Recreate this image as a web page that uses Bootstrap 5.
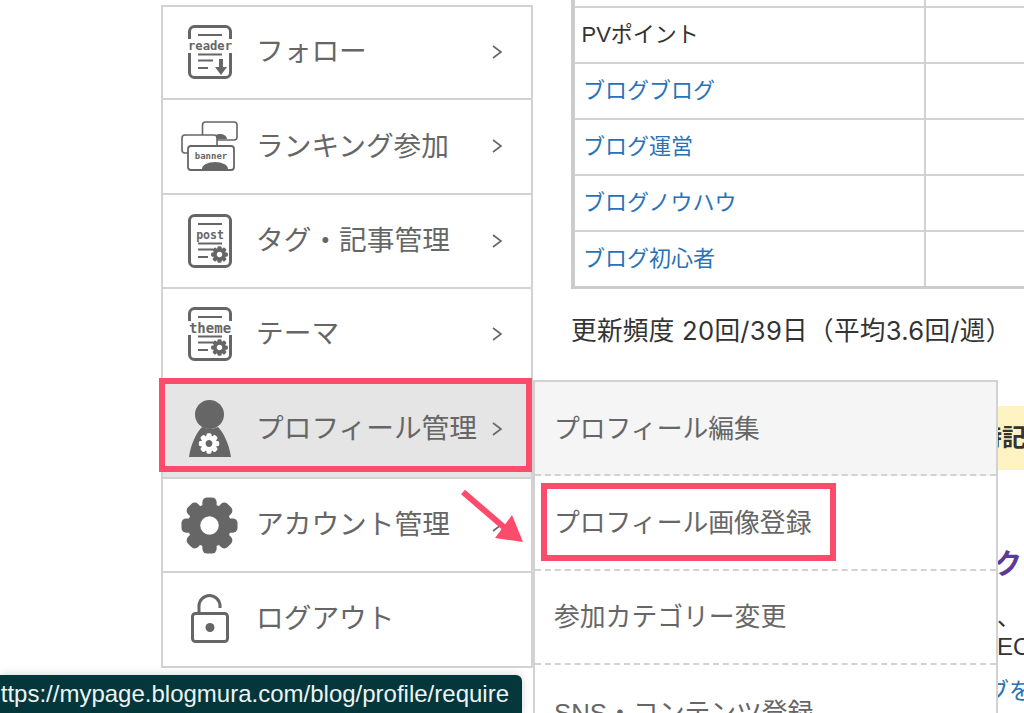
<!DOCTYPE html>
<html lang="ja">
<head>
<meta charset="utf-8">
<title>プロフィール管理</title>
<link href="https://cdn.jsdelivr.net/npm/bootstrap@5.3.0/dist/css/bootstrap.min.css" rel="stylesheet">
<style>
html,body{height:713px;overflow:hidden;background:#fff}
body{font-family:"Liberation Sans","Noto Sans CJK JP",sans-serif;color:#333}
.stage{position:relative;width:1024px;height:713px;overflow:hidden;padding-left:161px}
.side-col{width:372px;flex:none;padding-top:5px}
.side-menu{border:2px solid #d2d2d2;background:#fff}
.side-row{height:94.7px;border-bottom:2px solid #d2d2d2;color:#666;font-size:27.7px;padding-left:18px;padding-right:28px}
.side-row:first-child{height:93px;padding-bottom:2px}
.side-row:nth-child(4),.side-row.on{padding-bottom:3px}
.side-row:last-child{border-bottom:0;height:93px;padding-bottom:2px}
.side-row.on{background:#e5e5e5}
.ico-slot{width:57px;flex:none;margin-right:18px}
.chev{margin-left:auto;flex:none}
.right-col{width:452px;flex:none;margin-left:38px}
.data-frame{border-left:4px solid #ccc;border-bottom:3px solid #ccc;margin-right:-60px}
.data-table{width:100%;border-collapse:collapse;font-size:22px;table-layout:fixed}
.data-table td{height:56px;border:2px solid #d2d2d2;border-left:0;padding:0 0 2px 8px;vertical-align:middle}
.data-table tr:first-child td{height:7px;border-top:0;padding:0;font-size:0}
.data-table tr:last-child td{border-bottom:0;height:55px}
.data-table td:first-child{width:350px}
.data-table a{color:#2a72b5;text-decoration:none}
.data-table .plain{padding-left:6.5px;color:#333}
.freq{font-family:Inter,"Noto Sans CJK JP",sans-serif;font-size:25.6px;letter-spacing:.3px;margin:24px 0 0;line-height:36px;white-space:nowrap}
.notice{height:64px;background:#fff3c4;margin-top:57px;margin-right:-10px;padding-left:407px;font-size:24px;font-weight:700;line-height:64px;white-space:nowrap;color:#333}
.hd{margin-top:75px;font-size:28px;font-weight:700;color:#5b3a9a;padding-left:283px;white-space:nowrap;line-height:40px}
.para{font-size:23px;line-height:30px;white-space:nowrap}
.para.l1{margin-top:17px;padding-left:426px}
.para.l2{padding-left:426px;font-size:24px}
.para.l3{margin-top:14px;padding-left:415px;color:#2a72b5}
.sub-menu{position:absolute;left:533px;top:380px;width:465px;background:#fff;border:2px solid #d2d2d2;border-bottom:0;color:#666;font-size:25.8px}
.sub-row{height:94.3px;border-bottom:2px dashed #d2d2d2;padding-left:19px;padding-top:2px}
.sub-row.on{background:#f5f5f5}
.sub-row:last-child{border-bottom:0}
.mark-box{position:absolute;border:6.5px solid #fd4b6b;pointer-events:none}
.mark-a{left:159px;top:378px;width:373px;height:94px}
.mark-b{left:541px;top:483px;width:295px;height:78px}
.arrow-mark{position:absolute;left:458px;top:486px}
.url-tip{position:absolute;left:0;bottom:0;width:522px;height:38px;background:#03373c;border-top-right-radius:6px;color:#eef3f3;font-size:24px;box-shadow:0 0 10px rgba(0,0,0,.18);white-space:nowrap;padding-right:13px;overflow:hidden}
svg text{font-family:"DejaVu Sans Mono",monospace;font-weight:700}
</style>
</head>
<body>
<svg width="0" height="0" class="position-absolute">
  <defs>
    <symbol id="gear" viewBox="-12 -12 24 24">
      <circle r="6.5" fill="none" stroke="currentColor" stroke-width="5.2"/>
      <g fill="currentColor">
        <rect x="-3" y="-11.8" width="6" height="5" rx="2"/>
        <rect x="-3" y="-11.8" width="6" height="5" rx="2" transform="rotate(45)"/>
        <rect x="-3" y="-11.8" width="6" height="5" rx="2" transform="rotate(90)"/>
        <rect x="-3" y="-11.8" width="6" height="5" rx="2" transform="rotate(135)"/>
        <rect x="-3" y="-11.8" width="6" height="5" rx="2" transform="rotate(180)"/>
        <rect x="-3" y="-11.8" width="6" height="5" rx="2" transform="rotate(225)"/>
        <rect x="-3" y="-11.8" width="6" height="5" rx="2" transform="rotate(270)"/>
        <rect x="-3" y="-11.8" width="6" height="5" rx="2" transform="rotate(315)"/>
      </g>
    </symbol>
    <symbol id="chev" viewBox="0 0 12 16">
      <path d="M2 2l8 6-8 6" fill="none" stroke="#666" stroke-width="1.6"/>
    </symbol>
  </defs>
</svg>

<div class="stage d-flex">
  <div class="side-col">
    <div class="side-menu">
      <div class="side-row d-flex align-items-center">
        <div class="ico-slot d-flex justify-content-center">
          <svg width="44" height="54" viewBox="0 0 44 54" color="#666">
            <rect x="1.5" y="1.5" width="41" height="51" rx="5" fill="none" stroke="#666" stroke-width="3"/>
            <rect x="0" y="14" width="44" height="14" fill="#fff"/>
            <path d="M10 10h24M10 29.5h24M10 35.5h15M10 43h10" stroke="#666" stroke-width="1.8"/>
            <text x="22" y="25" text-anchor="middle" font-size="12.2" fill="#666">reader</text>
            <path d="M31 34h4v8h4l-6 8-6-8h4z" fill="#666"/>
          </svg>
        </div>
        <span>フォロー</span>
        <svg class="chev" width="12" height="16"><use href="#chev"/></svg>
      </div>
      <div class="side-row d-flex align-items-center">
        <div class="ico-slot d-flex justify-content-center">
          <svg width="57" height="50" viewBox="0 0 57 50">
            <rect x="21.5" y="1" width="34.5" height="18" rx="3" fill="#fff" stroke="#666" stroke-width="1.6"/>
            <path d="M32 18a7 5 0 0 1 14 0z" fill="#666"/>
            <rect x="1" y="14" width="35" height="18" rx="3" fill="#fff" stroke="#666" stroke-width="1.6"/>
            <rect x="7" y="25" width="46" height="24" rx="3" fill="#fff" stroke="#666" stroke-width="1.8"/>
            <text x="30" y="38" text-anchor="middle" font-size="9" fill="#666">banner</text>
            <path d="M21 48a13 7 0 0 1 26 0z" fill="#666"/>
          </svg>
        </div>
        <span>ランキング参加</span>
        <svg class="chev" width="12" height="16"><use href="#chev"/></svg>
      </div>
      <div class="side-row d-flex align-items-center">
        <div class="ico-slot d-flex justify-content-center">
          <svg width="44" height="54" viewBox="0 0 44 54" color="#666">
            <rect x="1.5" y="1.5" width="41" height="51" rx="5" fill="none" stroke="#666" stroke-width="3"/>
            <path d="M10 10h24M10 29.5h24M10 35.5h15M10 43h10" stroke="#666" stroke-width="1.8"/>
            <text x="22" y="25" text-anchor="middle" font-size="11.5" fill="#666">post</text>
            <use href="#gear" x="23" y="32" width="17" height="17"/>
          </svg>
        </div>
        <span>タグ・記事管理</span>
        <svg class="chev" width="12" height="16"><use href="#chev"/></svg>
      </div>
      <div class="side-row d-flex align-items-center">
        <div class="ico-slot d-flex justify-content-center">
          <svg width="44" height="54" viewBox="0 0 44 54" color="#666">
            <rect x="1.5" y="1.5" width="41" height="51" rx="5" fill="none" stroke="#666" stroke-width="3"/>
            <rect x="0" y="14" width="44" height="14" fill="#fff"/>
            <path d="M10 10h24M10 29.5h24M10 35.5h15M10 43h10" stroke="#666" stroke-width="1.8"/>
            <text x="22" y="25.5" text-anchor="middle" font-size="14" fill="#666">theme</text>
            <use href="#gear" x="23" y="32" width="17" height="17"/>
          </svg>
        </div>
        <span>テーマ</span>
        <svg class="chev" width="12" height="16"><use href="#chev"/></svg>
      </div>
      <div class="side-row on d-flex align-items-center">
        <div class="ico-slot d-flex justify-content-center">
          <svg width="44" height="58" viewBox="0 0 44 58" color="#fff">
            <circle cx="21.5" cy="14.5" r="14.5" fill="#666"/>
            <path d="M1 57C3 43 9 32 14 27q8 4 16 0c5 5 11 16 13 30z" fill="#666"/>
            <use href="#gear" x="10.5" y="33" width="21" height="21"/>
          </svg>
        </div>
        <span>プロフィール管理</span>
        <svg class="chev" width="12" height="16"><use href="#chev"/></svg>
      </div>
      <div class="side-row d-flex align-items-center">
        <div class="ico-slot d-flex justify-content-center">
          <svg width="57" height="57" viewBox="0 0 57 57" color="#666"><use href="#gear" width="57" height="57"/></svg>
        </div>
        <span>アカウント管理</span>
        <svg class="chev" width="12" height="16"><use href="#chev"/></svg>
      </div>
      <div class="side-row d-flex align-items-center">
        <div class="ico-slot d-flex justify-content-center">
          <svg width="38" height="50" viewBox="0 0 38 50">
            <rect x="1.5" y="19.5" width="35" height="28" rx="3" fill="none" stroke="#666" stroke-width="3"/>
            <circle cx="19" cy="33.5" r="4.5" fill="#666"/>
            <path d="M8 19V12a10.5 10.5 0 0 1 21 0v2" fill="none" stroke="#666" stroke-width="3"/>
          </svg>
        </div>
        <span>ログアウト</span>
      </div>
    </div>
  </div>

  <div class="right-col">
    <div class="data-frame">
      <table class="data-table">
        <tbody>
          <tr><td></td><td></td></tr>
          <tr><td class="plain">PVポイント</td><td></td></tr>
          <tr><td><a href="#">ブログブログ</a></td><td></td></tr>
          <tr><td><a href="#">ブログ運営</a></td><td></td></tr>
          <tr><td><a href="#">ブログノウハウ</a></td><td></td></tr>
          <tr><td><a href="#">ブログ初心者</a></td><td></td></tr>
        </tbody>
      </table>
    </div>
    <p class="freq">更新頻度 20回/39日（平均3.6回/週）</p>
    <div class="notice">特記事項</div>
    <div class="hd">ブログランクアップ</div>
    <div class="para l1">、</div>
    <div class="para l2">EC</div>
    <div class="para l3">ブを</div>
  </div>

  <div class="sub-menu">
    <div class="sub-row on d-flex align-items-center">プロフィール編集</div>
    <div class="sub-row d-flex align-items-center">プロフィール画像登録</div>
    <div class="sub-row d-flex align-items-center">参加カテゴリー変更</div>
    <div class="sub-row d-flex align-items-center">SNS・コンテンツ登録</div>
  </div>

  <div class="mark-box mark-a"></div>
  <div class="mark-box mark-b"></div>
  <svg class="arrow-mark" width="72" height="64" viewBox="0 0 72 64">
    <path d="M5 6L48 43" stroke="#fd4b6b" stroke-width="6"/>
    <path d="M65 56L37 52L54 29z" fill="#fd4b6b"/>
  </svg>

  <div class="url-tip d-flex align-items-center justify-content-end">https://mypage.blogmura.com/blog/profile/require</div>
</div>
<script src="https://cdn.jsdelivr.net/npm/bootstrap@5.3.0/dist/js/bootstrap.bundle.min.js"></script>
</body>
</html>
